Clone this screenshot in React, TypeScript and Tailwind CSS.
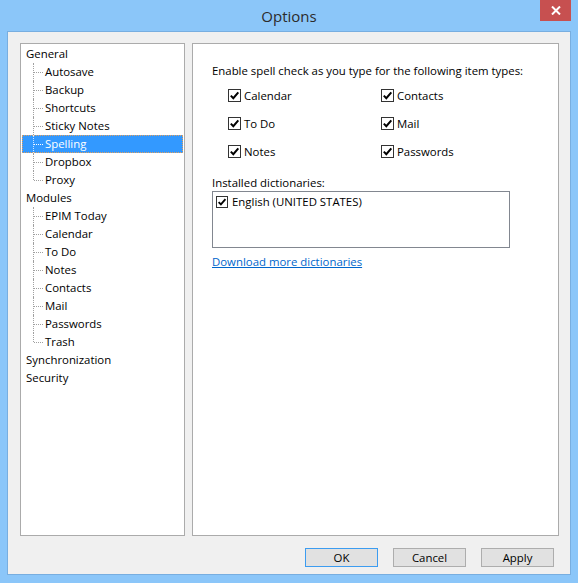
import React from "react";

const font = { fontFamily: '"Segoe UI", "Open Sans", "Noto Sans", sans-serif' };

function Check({ size = 13 }: { size?: number }) {
  return (
    <span
      className="inline-flex items-center justify-center bg-white border border-[#333333] shrink-0"
      style={{ width: size, height: size }}
    >
      <svg width={size - 2} height={size - 2} viewBox="0 0 11 11">
        <path d="M1.8 5.6 L4.3 8.2 L9.3 2.3" fill="none" stroke="#000" strokeWidth="2" />
      </svg>
    </span>
  );
}

type Node = { label: string; children?: string[] };

const tree: Node[] = [
  { label: "General", children: ["Autosave", "Backup", "Shortcuts", "Sticky Notes", "Spelling", "Dropbox", "Proxy"] },
  { label: "Modules", children: ["EPIM Today", "Calendar", "To Do", "Notes", "Contacts", "Mail", "Passwords", "Trash"] },
  { label: "Synchronization" },
  { label: "Security" },
];

function ChildRow({ label, last, selected }: { label: string; last: boolean; selected: boolean }) {
  return (
    <div className="relative h-[18px] flex items-center">
      {selected && (
        <div className="absolute left-[1px] right-[1px] top-0 bottom-0 bg-[#3399ff] border border-dotted border-[#e0a060]" />
      )}
      <div
        className={`absolute left-[12px] top-0 w-0 border-l border-dotted ${selected ? "border-[#cfe6ff]" : "border-[#a0a0a0]"} ${last ? "h-[9px]" : "h-[18px]"}`}
      />
      <div
        className={`absolute left-[13px] top-[9px] w-[9px] h-0 border-t border-dotted ${selected ? "border-[#ffffff]" : "border-[#a0a0a0]"}`}
      />
      <span className={`relative pl-[24px] text-[11.4px] leading-[16px] ${selected ? "text-white" : "text-black"}`}>{label}</span>
    </div>
  );
}

function Tree() {
  return (
    <div className="w-[165px] h-[493px] bg-white border border-[#ababab] pt-[1px]">
      {tree.map((n) => (
        <div key={n.label}>
          <div className="h-[18px] flex items-center pl-[5px] text-[11.4px] leading-[16px] text-black">{n.label}</div>
          {n.children?.map((c, i) => (
            <ChildRow key={c} label={c} last={i === n.children!.length - 1} selected={c === "Spelling"} />
          ))}
        </div>
      ))}
    </div>
  );
}

function CheckItem({ label }: { label: string }) {
  return (
    <div className="flex items-center gap-[3px] h-[13px]">
      <Check />
      <span className="text-[11.4px] leading-[16px] text-black">{label}</span>
    </div>
  );
}

function Btn({ label, def }: { label: string; def?: boolean }) {
  return (
    <div
      className={`w-[73px] h-[19px] flex items-center justify-center bg-[#e1e1e1] border ${def ? "border-[#3c9cf0]" : "border-[#adadad]"} text-[11.4px] leading-[16px] text-black`}
    >
      {label}
    </div>
  );
}

export default function App() {
  return (
    <div className="w-[578px] h-[583px] bg-[#8bc6f9] flex flex-col overflow-hidden" style={font}>
      <div className="relative h-[31px] flex items-center justify-center">
        <span className="text-[15px] leading-[20px] text-[#2b2b2b]">Options</span>
        <div className="absolute top-0 right-[7px] w-[31px] h-[21px] bg-[#c75050] flex items-center justify-center">
          <svg width="10" height="9" viewBox="0 0 10 9">
            <path d="M1 0.5 L9 8.5 M9 0.5 L1 8.5" stroke="#fff" strokeWidth="2" />
          </svg>
        </div>
      </div>
      <div className="mx-[7px] h-[544px] border border-[#78aee0] bg-[#f0f0f0] pt-[11px] pl-[12px] flex flex-col">
        <div className="flex gap-[7px]">
          <Tree />
          <div className="w-[367px] h-[493px] bg-white border border-[#ababab] pl-[19px] pt-[19px]">
            <div className="text-[11.4px] leading-[16px] text-black">Enable spell check as you type for the following item types:</div>
            <div className="grid grid-cols-[153px_auto] gap-y-[15px] pl-[16px] mt-[10px]">
              <CheckItem label="Calendar" />
              <CheckItem label="Contacts" />
              <CheckItem label="To Do" />
              <CheckItem label="Mail" />
              <CheckItem label="Notes" />
              <CheckItem label="Passwords" />
            </div>
            <div className="mt-[17px] text-[11.4px] leading-[16px] text-black">Installed dictionaries:</div>
            <div className="w-[298px] h-[57px] border border-[#828790] bg-white pt-[4px] pl-[3px]">
              <div className="flex items-center gap-[4px] h-[12px]">
                <Check size={12} />
                <span className="text-[11.4px] leading-[16px] text-black">English (UNITED STATES)</span>
              </div>
            </div>
            <div className="mt-[6px] text-[11.4px] leading-[16px] text-[#0066cc] underline">Download more dictionaries</div>
          </div>
        </div>
        <div className="flex gap-[15px] mt-[12px] pl-[285px]">
          <Btn label="OK" def />
          <Btn label="Cancel" />
          <Btn label="Apply" />
        </div>
      </div>
    </div>
  );
}
